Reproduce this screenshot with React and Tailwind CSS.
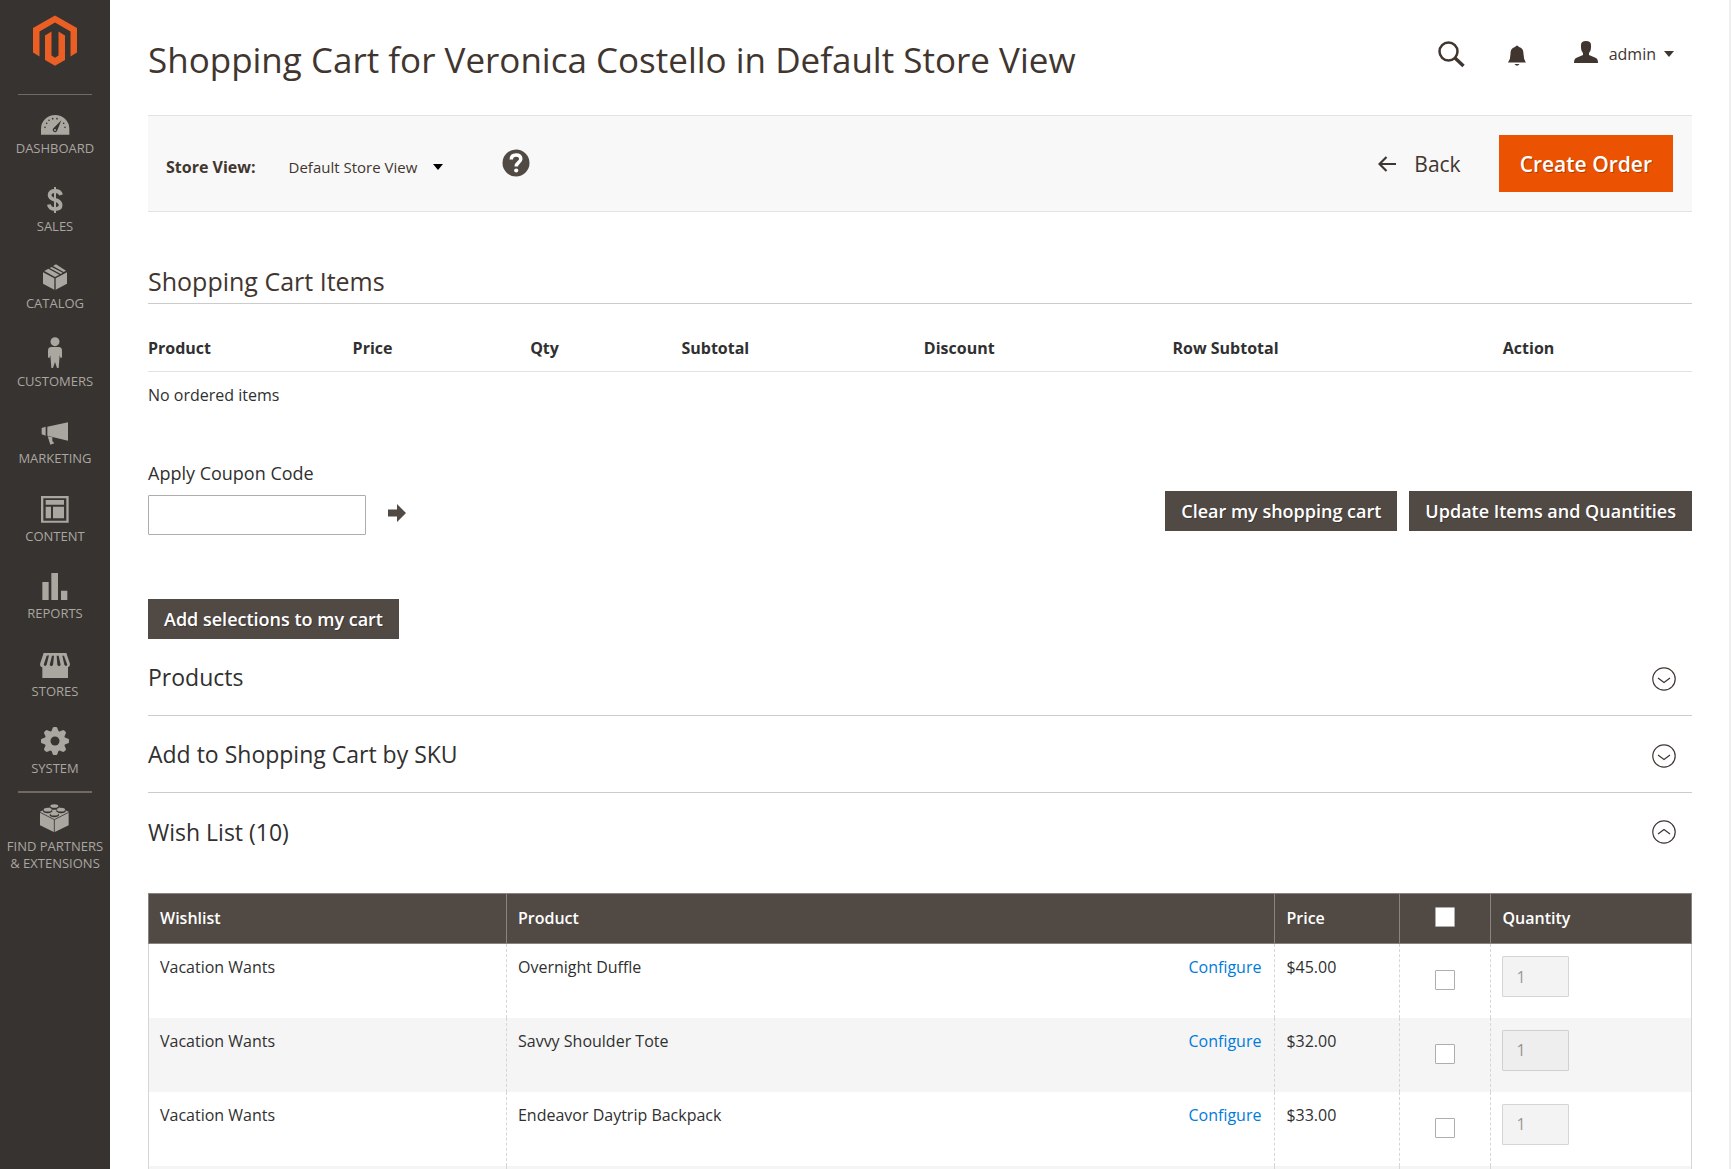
import React from 'react';

const ICONS = {
  dashboard: (
    <svg width="30" height="20" viewBox="120 345 90 60" aria-hidden="true">
      <path fill="currentColor" d="M123 404V387a42.500 42 0 0 1 85 0V404Z" />
      <path fill="#373330" d="M184 361L172 391a7 7 0 1 1-11-7Z" />
      <circle cx="165" cy="390" r="3" fill="currentColor" />
      <g fill="#373330">
        <circle cx="135" cy="382" r="2.500" />
        <circle cx="140" cy="370" r="2.500" />
        <circle cx="147" cy="361" r="2.500" />
        <circle cx="158" cy="356" r="2.500" />
        <circle cx="171" cy="356" r="2.500" />
        <circle cx="191" cy="370" r="2.500" />
        <circle cx="195" cy="382" r="2.500" />
      </g>
    </svg>
  ),
  sales: (
    <svg width="18" height="26" viewBox="0 0 18 26" fill="none" stroke="currentColor" aria-hidden="true">
      <path strokeWidth="3.800" d="M15 8C14.300 5 12 4 9 4C5.500 4 3.600 5.400 3.600 8C3.600 11 6 12 9 12.800C12.500 13.700 14.600 14.800 14.600 18C14.600 20.700 12.400 22 9 22C5.600 22 3.400 20.800 2.900 17.500" />
      <path strokeWidth="2" d="M9 0V26" />
    </svg>
  ),
  catalog: (
    <svg width="24" height="26" viewBox="129 790 72 78" fill="currentColor" aria-hidden="true">
      <path d="M129 815L163 833V867L129 849Z" />
      <path d="M201 815L167 833V867L201 849Z" />
      <path d="M133 811L145 804L178 822L165 829Z" />
      <path d="M149 802L155 799L188 816L182 820Z" />
      <path d="M159 796L168 791L198 810L191 814Z" />
    </svg>
  ),
  customers: (
    <svg width="16" height="31" viewBox="143 47 48 93" fill="currentColor" aria-hidden="true">
      <circle cx="167" cy="61" r="13.500" />
      <path d="M156 77H178Q188 77 188 88V108L184 111L181 102L178 140H173L167 122L161 140H156L153 102L150 111L146 108V88Q146 77 156 77Z" />
    </svg>
  ),
  marketing: (
    <svg width="28" height="23" viewBox="124 307 84 69" fill="currentColor" aria-hidden="true">
      <path d="M143 321L205 308V363L143 348Z" />
      <path d="M126 325L138 321V348L126 344Z" />
      <path d="M144 350L158 353V364L164 371L152 375Z" />
    </svg>
  ),
  content: (
    <svg width="28" height="27" viewBox="124 528 84 81" fill="currentColor" aria-hidden="true">
      <path fillRule="evenodd" d="M124 528H207V608H124ZM131 535V602H200V535Z" />
      <path d="M138 540H193V554H138ZM138 560H154V595H138ZM160 560H193V595H160Z" />
    </svg>
  ),
  reports: (
    <svg width="26" height="27" viewBox="128 759 78 81" fill="currentColor" aria-hidden="true">
      <path d="M129 786H148V840H129ZM156 759H176V840H156ZM185 812H204V840H185Z" />
    </svg>
  ),
  stores: (
    <svg width="30" height="25" viewBox="120 162 90 75" aria-hidden="true">
      <path fill="currentColor" d="M131 162H199L210 195Q210 204 204 205V237H127V205Q120 204 120 195Z" />
      <path fill="#373330" d="M140 170L147 169L140 197Q136 204 131 197ZM156 170H162L159 198Q154 205 149 198ZM170 170H176L182 198Q177 205 172 198ZM187 170H192L202 197Q199 204 193 197Z" />
      <path stroke="currentColor" strokeWidth="3" d="M131 165H199" />
    </svg>
  ),
  system: (
    <svg width="28" height="28" viewBox="-42 -42 84 84" aria-hidden="true">
      <g fill="currentColor">
        <circle r="31" />
        {[0, 45, 90, 135, 180, 225, 270, 315].map((a) => (
          <path key={a} transform={`rotate(${a})`} d="M-12 -26L-6 -41Q0 -44 6 -41L12 -26Z" />
        ))}
      </g>
      <circle r="13.500" fill="#373330" />
    </svg>
  ),
  partners: (
    <svg width="29" height="29" viewBox="122 614 87 87" aria-hidden="true">
      <path fill="currentColor" d="M165 618L208 637V678L165 699L122 678V637Z" />
      <path fill="none" stroke="#373330" strokeWidth="2.500" d="M122 639L165 661L208 639M165 661V699" />
      <g fill="#373330">
        <ellipse cx="165" cy="625" rx="14" ry="6.500" />
        <ellipse cx="145" cy="635" rx="14" ry="6.500" />
        <ellipse cx="185" cy="635" rx="14" ry="6.500" />
        <ellipse cx="165" cy="647" rx="14" ry="6.500" />
      </g>
      <g fill="currentColor">
        <ellipse cx="165" cy="620" rx="12" ry="5.500" />
        <ellipse cx="145" cy="631" rx="12" ry="5.500" />
        <ellipse cx="185" cy="631" rx="12" ry="5.500" />
        <ellipse cx="165" cy="643" rx="12" ry="5.500" />
      </g>
    </svg>
  ),
};

const NAV = [
  ['dashboard', 'DASHBOARD'],
  ['sales', 'SALES'],
  ['catalog', 'CATALOG'],
  ['customers', 'CUSTOMERS'],
  ['marketing', 'MARKETING'],
  ['content', 'CONTENT'],
  ['reports', 'REPORTS'],
  ['stores', 'STORES'],
  ['system', 'SYSTEM'],
];

const WISHES = [
  ['Overnight Duffle', '$45.00'],
  ['Savvy Shoulder Tote', '$32.00'],
  ['Endeavor Daytrip Backpack', '$33.00'],
];

function NavItem({ icon, children }) {
  return (
    <a href="#" className="flex flex-col items-center text-center text-[13px] leading-[17px] text-[#aaa6a0]">
      <span className="mb-[5px] flex h-8 items-end">{ICONS[icon]}</span>
      {children}
    </a>
  );
}

function Sidebar() {
  return (
    <nav className="flex w-[110px] shrink-0 flex-col items-center bg-[#373330]">
      <a href="#" aria-label="Magento" className="mt-[15px]">
        <svg width="44" height="51" viewBox="33 15 44 51" fill="#eb5f25" aria-hidden="true">
          <path d="M55 15.500L77 28V52.500L70.500 56.500V31.500L55 22.500L39.500 31.500V56.500L33 52.500V28Z" />
          <path d="M45 35.500L51.500 31.500V55.500L55 57.800L58.500 55.500V31.500L65 35.500V60L55 65.700L45 60Z" />
        </svg>
      </a>
      <div className="mt-7 h-px w-[74px] bg-[#736963]" />
      <div className="mt-2 grid h-[698px] grid-rows-9">
        {NAV.map(([icon, label]) => (
          <NavItem key={icon} icon={icon}>{label}</NavItem>
        ))}
      </div>
      <div className="-mt-2.5 mb-2 h-0.5 w-[74px] bg-[#736963]" />
      <NavItem icon="partners">
        <span>FIND PARTNERS<br />&amp; EXTENSIONS</span>
      </NavItem>
    </nav>
  );
}

function Caret({ color }) {
  return (
    <svg width="10" height="6" viewBox="0 0 10 6" fill={color} aria-hidden="true">
      <path d="M0 0H10L5 6Z" />
    </svg>
  );
}

function DarkButton({ children }) {
  return (
    <button className="h-10 bg-[#514943] px-4 text-[18px] font-semibold leading-6 text-white [text-shadow:1px_1px_0_rgba(0,0,0,0.25)]">
      {children}
    </button>
  );
}

function Section({ title, open }) {
  return (
    <button
      aria-expanded={open}
      className={`flex h-[77px] w-full items-center justify-between pr-4 text-left text-[23px] font-medium leading-7 text-[#303030] ${open ? '' : 'border-b border-[#cccccc]'}`}
    >
      {title}
      <svg
        className={open ? '' : 'mt-1'}
        width="24"
        height="24"
        viewBox="0 0 24 24"
        fill="none"
        stroke="#41362f"
        strokeWidth="1.200"
        aria-hidden="true"
      >
        <circle cx="12" cy="12" r="11.200" />
        <path d={open ? 'M6 14L12 9.500L18 14' : 'M6 11L12 15.500L18 11'} />
      </svg>
    </button>
  );
}

const CHECK = 'block size-5 appearance-none rounded-[1px] border border-[#adadad] bg-white';

export default function App() {
  return (
    <div className="flex h-screen overflow-hidden bg-white font-['Open_Sans',sans-serif] text-[15px] leading-[21px] text-[#303030]">
      <Sidebar />
      <main className="min-w-0 flex-1 border-r-2 border-[#efefef] pl-[38px] pr-[37px]">
        <header className="flex h-[115px] items-start justify-between">
          <h1 className="mt-[38px] text-[35px] leading-[44px] text-[#41362f]">
            Shopping Cart for Veronica Costello in Default Store View
          </h1>
          <div className="mr-[18px] mt-[41px] flex items-start text-[#41362f]">
            <button aria-label="Search">
              <svg width="27" height="27" viewBox="0 0 27 27" fill="none" stroke="currentColor" aria-hidden="true">
                <circle cx="10.500" cy="10.500" r="9" strokeWidth="2.500" />
                <path strokeWidth="3.500" d="M17 17L25.500 25" />
              </svg>
            </button>
            <button aria-label="Notifications" className="ml-[43px] mt-1">
              <svg width="18" height="21" viewBox="0 0 18 21" fill="currentColor" aria-hidden="true">
                <path d="M7 2Q9-1 11 2C14.500 3 15.500 5.500 15.500 9Q15.500 14 18 17.500H0Q2.500 14 2.500 9C2.500 5.500 3.500 3 7 2ZM6.500 19H11.500Q9 22.500 6.500 19Z" />
              </svg>
            </button>
            <button className="ml-12 flex items-start text-[16px] leading-[22px]">
              <svg width="24" height="22" viewBox="0 0 24 22" fill="currentColor" aria-hidden="true">
                <path d="M7 4Q7 0 12 0T17 4Q17.500 9 15 12V14L22 17Q24 18 24 22H0Q0 18 2 17L9 14V12Q6.500 9 7 4Z" />
              </svg>
              <span className="ml-[11px] mr-2 mt-0.5">admin</span>
              <span className="mt-[10px]"><Caret color="#41362f" /></span>
            </button>
          </div>
        </header>

        <div className="flex h-[97px] items-center border-y border-[#e3e3e3] bg-[#f8f8f8] pl-[18px] pr-[19px]">
          <label htmlFor="store" className="mt-2 text-[16px] font-bold text-[#41362f]">Store View:</label>
          <span className="relative ml-[33px] mt-1.5 flex items-center">
            <select id="store" className="appearance-none bg-transparent pr-[25px] text-[15px] leading-[22px] text-[#41362f]">
              <option>Default Store View</option>
            </select>
            <span className="pointer-events-none absolute right-0"><Caret color="#000000" /></span>
          </span>
          <button aria-label="Help" className="mb-0.5 ml-[59px]">
            <svg width="28" height="28" viewBox="0 0 28 28" fill="none" aria-hidden="true">
              <circle cx="14" cy="14" r="13.500" fill="#514943" />
              <path stroke="#fff" strokeWidth="3.500" d="M9.300 10.500C9.300 7.500 11.200 6 14 6C17 6 18.800 7.600 18.800 10C18.800 13.300 14.200 13.500 14.200 17.500" />
              <circle cx="14.200" cy="21.500" r="2.100" fill="#fff" />
            </svg>
          </button>
          <button className="ml-auto flex items-center text-[21px] font-medium leading-7 text-[#41362f]">
            <svg width="18" height="16" viewBox="0 0 18 16" fill="none" stroke="currentColor" strokeWidth="2.200" aria-hidden="true">
              <path d="M8.500 1L1.500 8L8.500 15M1.500 8H18" />
            </svg>
            <span className="ml-[18px]">Back</span>
          </button>
          <button className="ml-[38px] h-[57px] bg-[#eb5202] px-[21px] text-[21px] font-semibold leading-7 text-white [text-shadow:1px_1px_0_rgba(0,0,0,0.25)]">
            Create Order
          </button>
        </div>

        <h2 className="mt-[52px] border-b border-[#cccccc] pb-1 text-[25px] leading-[35px] text-[#41362f]">
          Shopping Cart Items
        </h2>
        <table className="mt-[23px] w-full table-fixed text-left">
          <colgroup>
            <col className="w-[13.25%]" />
            <col className="w-[11.5%]" />
            <col className="w-[9.8%]" />
            <col className="w-[15.7%]" />
            <col className="w-[16.1%]" />
            <col className="w-[21.4%]" />
            <col />
          </colgroup>
          <thead>
            <tr className="h-11 border-b border-[#e3e3e3] text-[16px]">
              {['Product', 'Price', 'Qty', 'Subtotal', 'Discount', 'Row Subtotal', 'Action'].map((h) => (
                <th key={h} className="font-bold">{h}</th>
              ))}
            </tr>
          </thead>
          <tbody>
            <tr className="h-12 text-[16px]"><td colSpan={7}>No ordered items</td></tr>
          </tbody>
        </table>

        <div className="mt-[42px] flex items-end justify-between">
          <div>
            <label htmlFor="coupon" className="block text-[18px] font-medium leading-6">Apply Coupon Code</label>
            <div className="mt-2.5 flex items-center">
              <input id="coupon" type="text" className="h-10 w-[218px] rounded-[1px] border border-[#adadad] px-3" />
              <button aria-label="Apply" className="mb-1 ml-[22px]">
                <svg width="18" height="18" viewBox="0 0 18 18" fill="#514943" aria-hidden="true">
                  <path d="M0 5.500H9V0L18 9L9 18V12.500H0Z" />
                </svg>
              </button>
            </div>
          </div>
          <div className="mb-1 flex gap-3">
            <DarkButton>Clear my shopping cart</DarkButton>
            <DarkButton>Update Items and Quantities</DarkButton>
          </div>
        </div>

        <div className="mt-16">
          <DarkButton>Add selections to my cart</DarkButton>
        </div>
        <Section title="Products" />
        <Section title="Add to Shopping Cart by SKU" />
        <Section title="Wish List (10)" open />

        <table className="mt-[23px] w-full table-fixed border-collapse text-left">
          <colgroup>
            <col className="w-[23.2%]" />
            <col />
            <col className="w-[125px]" />
            <col className="w-[91px]" />
            <col className="w-[13%]" />
          </colgroup>
          <thead>
            <tr className="h-[50px] bg-[#514943] text-[16px] text-white [&>th]:border [&>th]:border-[#8a837f] [&>th]:px-[11px] [&>th]:font-semibold">
              <th>Wishlist</th>
              <th>Product</th>
              <th>Price</th>
              <th><input type="checkbox" aria-label="Select all" className={`${CHECK} mx-auto mb-1`} /></th>
              <th>Quantity</th>
            </tr>
          </thead>
          <tbody className="border-x border-[#d6d6d6] text-[16px] leading-[23px]">
            {WISHES.map(([name, price]) => (
              <tr key={name} className="h-[74px] align-top even:bg-[#f5f5f5] [&>td+td]:border-l [&>td+td]:border-dashed [&>td+td]:border-[#d6d6d6] [&>td]:px-[11px] [&>td]:pt-3">
                <td>Vacation Wants</td>
                <td>
                  <div className="flex justify-between pr-0.5">
                    {name}
                    <a href="#" className="text-[#007bdb]">Configure</a>
                  </div>
                </td>
                <td>{price}</td>
                <td><input type="checkbox" aria-label={name} className={`${CHECK} mx-auto mt-3.5`} /></td>
                <td>
                  <input
                    type="text"
                    disabled
                    defaultValue="1"
                    aria-label={`${name} quantity`}
                    className="block h-[41px] w-[67px] rounded-[1px] border border-[#adadad] bg-[#e9e9e9] px-[13px] text-[16px] text-[#303030] opacity-50"
                  />
                </td>
              </tr>
            ))}
            <tr className="h-[74px] bg-[#f5f5f5] [&>td+td]:border-l [&>td+td]:border-dashed [&>td+td]:border-[#d6d6d6]">
              <td /><td /><td /><td /><td />
            </tr>
          </tbody>
        </table>
      </main>
    </div>
  );
}
